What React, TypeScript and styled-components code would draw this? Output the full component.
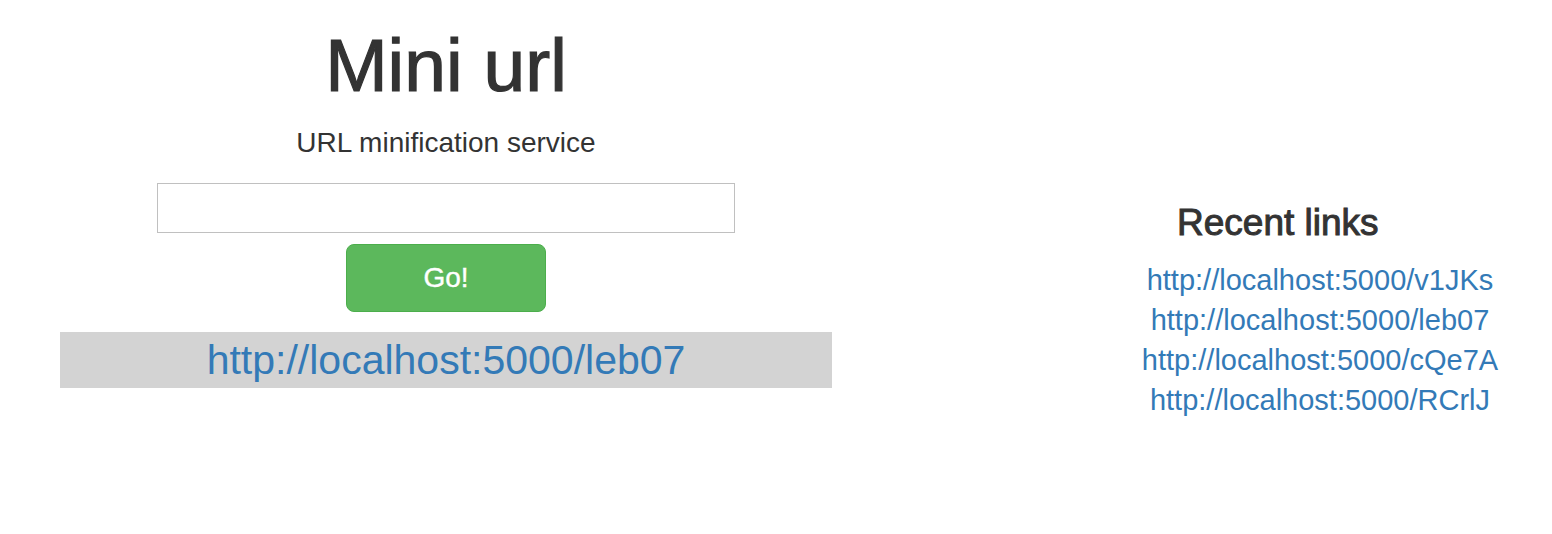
import { useState } from "react";
import styled, { createGlobalStyle } from "styled-components";

const recentLinks = ["v1JKs", "leb07", "cQe7A", "RCrlJ"];

const App = () => {
  const [url, setUrl] = useState("");

  return (
    <>
      <GlobalStyle />
      <Page>
        <Shortener>
          <Title>Mini url</Title>
          <Lead>URL minification service</Lead>
          <UrlInput
            type="text"
            value={url}
            onChange={(e) => setUrl(e.target.value)}
          />
          <GoButton type="button">Go!</GoButton>
          <Result>
            <ResultLink href="#">http://localhost:5000/leb07</ResultLink>
          </Result>
        </Shortener>
        <Recent>
          <RecentTitle>Recent links</RecentTitle>
          {recentLinks.map((slug) => (
            <RecentLink key={slug} href="#">
              http://localhost:5000/{slug}
            </RecentLink>
          ))}
        </Recent>
      </Page>
    </>
  );
};

export default App;

const GlobalStyle = createGlobalStyle`
  body {
    margin: 0;
    background: #fff;
    color: #333;
    font-family: "Liberation Sans", Helvetica, Arial, sans-serif;
  }
`;

const Page = styled.div`
  display: flex;
  align-items: flex-start;
  width: 1552px;
  min-height: 534px;
`;

const Shortener = styled.div`
  display: flex;
  flex-direction: column;
  align-items: center;
  width: 772px;
  margin-left: 60px;
  padding-top: 24px;
`;

// heading font is a medium weight in the original, stroke fakes it
const Title = styled.h1`
  margin: 0;
  font-size: 75px;
  font-weight: 400;
  line-height: 1.1;
  -webkit-text-stroke: 1.2px #333;
`;

const Lead = styled.p`
  margin: 20px 0 0;
  font-size: 28px;
  line-height: normal;
`;

const UrlInput = styled.input`
  box-sizing: border-box;
  width: 578px;
  height: 50px;
  margin-top: 24px;
  padding: 0 12px;
  border: 1px solid #c0c0c0;
  border-radius: 0;
  font: inherit;
  font-size: 28px;
  outline: none;
`;

const GoButton = styled.button`
  box-sizing: border-box;
  width: 200px;
  height: 68px;
  margin-top: 11px;
  border: 1px solid #4cae4c;
  border-radius: 8px;
  background: #5cb85c;
  color: #fff;
  font-family: inherit;
  font-size: 28px;
  -webkit-text-stroke: 0.4px #fff;
  cursor: pointer;
`;

const Result = styled.div`
  width: 100%;
  height: 56px;
  margin-top: 20px;
  background: #d3d3d3;
  text-align: center;
  line-height: 56px;
`;

const ResultLink = styled.a`
  color: #337ab7;
  font-size: 41px;
  text-decoration: none;
`;

const Recent = styled.div`
  display: flex;
  flex-direction: column;
  align-items: center;
  width: 464px;
  margin-left: auto;
  padding-top: 203px;
`;

const RecentTitle = styled.h4`
  align-self: flex-start;
  margin: 0 0 16px 89px;
  font-size: 37px;
  font-weight: 400;
  line-height: 1.1;
  -webkit-text-stroke: 1px #333;
`;

const RecentLink = styled.a`
  color: #337ab7;
  font-size: 29px;
  line-height: 40px;
  text-decoration: none;
`;
